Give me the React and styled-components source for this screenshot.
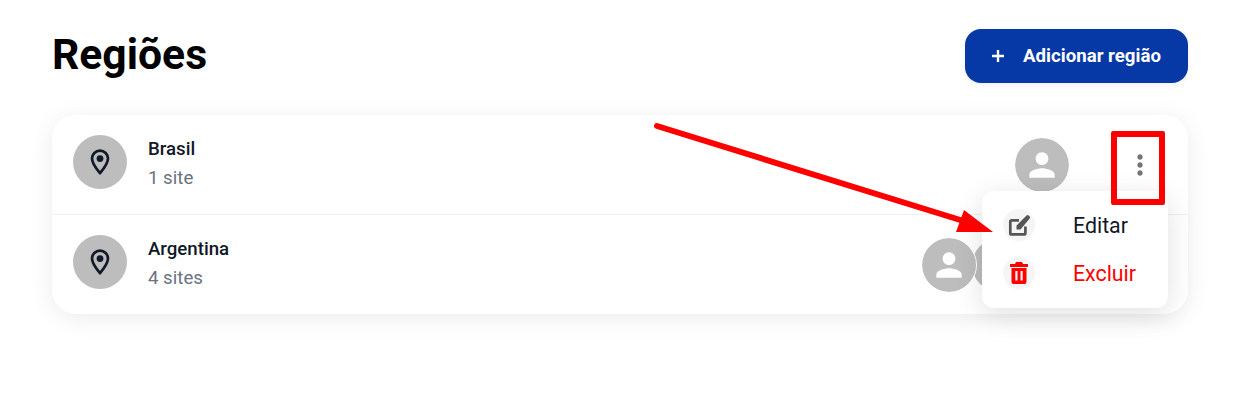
import React from "react";
import styled, { createGlobalStyle } from "styled-components";
import { MdMoreVert, MdPerson } from "react-icons/md";

const GlobalStyle = createGlobalStyle`
  html, body {
    margin: 0;
    background: #fff;
    font-family: Roboto, "Liberation Sans", sans-serif;
  }
`;

const regions = [
  { name: "Brasil", sites: "1 site", users: [0] },
  { name: "Argentina", sites: "4 sites", users: [0, -4, -11] },
];

const PlusIcon = () => (
  <svg width="14" height="14" viewBox="0 0 14 14">
    <path d="M7 1v12M1 7h12" stroke="#fff" strokeWidth="2.4" />
  </svg>
);

const PinIcon = () => (
  <svg width="24" height="28" viewBox="0 0 24 28" fill="none">
    <path
      d="M12 25.2C8 20.4 4 15.8 4 10.6a8 8 0 0 1 16 0c0 5.2-4 9.8-8 14.6z"
      stroke="#111827"
      strokeWidth="2.7"
      strokeLinejoin="round"
    />
    <circle cx="12" cy="10.6" r="3.4" fill="#111827" />
  </svg>
);

const EditIcon = () => (
  <svg width="24" height="24" viewBox="0 0 24 24" fill="none">
    <path
      d="M12 7.3H4.8A1.5 1.5 0 0 0 3.3 8.8v11.1a1.5 1.5 0 0 0 1.5 1.5h12.1a1.5 1.5 0 0 0 1.5-1.5V13.5"
      stroke="#555"
      strokeWidth="2.7"
    />
    <path
      d="M9.5 16.5v-4L19.5 2.4a1.6 1.6 0 0 1 2.2 0l1 1a1.6 1.6 0 0 1 0 2.2L13.5 16.5z"
      fill="#555"
    />
  </svg>
);

const TrashIcon = () => (
  <svg width="18" height="22" viewBox="0 0 18 22">
    <path
      fillRule="evenodd"
      fill="#ff0000"
      d="M6 0h6l1 2h5v3H0V2h5zM1.5 6h15v14a2 2 0 0 1-2 2h-11a2 2 0 0 1-2-2zM5.3 9v9.5h2.2V9zm5.2 0v9.5h2.2V9z"
    />
  </svg>
);

const App = () => {
  return (
    <Page>
      <GlobalStyle />
      <Header>
        <Title>Regiões</Title>
        <AddButton>
          <PlusIcon />
          Adicionar região
        </AddButton>
      </Header>

      <Card>
        {regions.map((region) => (
          <Row key={region.name}>
            <Info>
              <Circle>
                <PinIcon />
              </Circle>
              <Texts>
                <Name>{region.name}</Name>
                <Sites>{region.sites}</Sites>
              </Texts>
            </Info>
            <Avatars>
              {region.users.map((overlap, i) => (
                <Avatar key={i} $overlap={overlap}>
                  <MdPerson size={38} />
                </Avatar>
              ))}
            </Avatars>
            <Kebab>
              <MdMoreVert size={32} />
            </Kebab>
          </Row>
        ))}

        <Menu>
          <MenuItem>
            <MenuIcon>
              <EditIcon />
            </MenuIcon>
            Editar
          </MenuItem>
          <MenuItem $danger>
            <MenuIcon $danger>
              <TrashIcon />
            </MenuIcon>
            Excluir
          </MenuItem>
        </Menu>
      </Card>

      <Highlight />
      <Arrow width="1248" height="414" viewBox="0 0 1248 414">
        <line x1="657" y1="126" x2="970" y2="223" stroke="#ff0000" strokeWidth="6" strokeLinecap="round" />
        <polygon points="964,210 993,232 956,232" fill="#ff0000" />
      </Arrow>
    </Page>
  );
};

export default App;

const Page = styled.div`
  position: relative;
  box-sizing: border-box;
  width: 1248px;
  height: 414px;
  padding: 29px 60px 0 52px;
  overflow: hidden;
`;

const Header = styled.div`
  display: flex;
  justify-content: space-between;
  align-items: center;
  margin-bottom: 32px;
`;

const Title = styled.h1`
  align-self: flex-start;
  margin: 0;
  font-size: 42.67px;
  line-height: 50px;
  font-weight: 700;
  color: #000;
`;

const AddButton = styled.button`
  display: flex;
  align-items: center;
  justify-content: center;
  gap: 18px;
  box-sizing: border-box;
  width: 223px;
  height: 54px;
  padding: 0 1px 0 0;
  border: 0;
  border-radius: 16px;
  background: #0639a6;
  color: #fff;
  font-family: inherit;
  font-size: 18.67px;
  font-weight: 700;
  box-shadow: 0 2px 6px rgba(0, 0, 0, 0.06);
`;

const Card = styled.div`
  position: relative;
  height: 199px;
  border-radius: 24px;
  background: #fff;
  box-shadow: 0 4px 24px rgba(0, 0, 0, 0.08);
`;

const Row = styled.div`
  display: flex;
  align-items: center;
  box-sizing: border-box;
  height: 100px;
  padding: 0 21px;

  &:first-child {
    border-bottom: 1px solid #f0f0f0;
  }
`;

const Info = styled.div`
  display: flex;
  align-items: flex-start;
  gap: 21px;
  flex: 1;
  align-self: flex-start;
  padding-top: 20px;
`;

const Circle = styled.div`
  display: flex;
  align-items: center;
  justify-content: center;
  width: 54px;
  height: 54px;
  border-radius: 50%;
  background: #bdbdbd;
`;

const Texts = styled.div`
  display: flex;
  flex-direction: column;
  gap: 7.6px;
  padding-top: 2.6px;
`;

const Name = styled.div`
  font-size: 18.67px;
  line-height: 22px;
  font-weight: 500;
  color: #111827;
`;

const Sites = styled.div`
  font-size: 18.67px;
  line-height: 22px;
  color: #6b7280;
`;

const Avatars = styled.div`
  display: flex;
`;

const Avatar = styled.div`
  display: flex;
  align-items: center;
  justify-content: center;
  box-sizing: border-box;
  width: 54px;
  height: 54px;
  margin-left: ${(p) => p.$overlap}px;
  border-radius: 50%;
  background: #bdbdbd;
  color: #fff;
  outline: 1.5px solid #fff;

  &:first-child {
    z-index: 3;
  }
`;

const Kebab = styled.div`
  display: flex;
  align-items: center;
  justify-content: center;
  width: 54px;
  height: 54px;
  margin-left: 44px;
  color: #757575;
`;

const Menu = styled.div`
  position: absolute;
  top: 76px;
  right: 20px;
  z-index: 5;
  box-sizing: border-box;
  width: 186px;
  height: 117px;
  padding: 18px 21px;
  border-radius: 12px;
  background: #fff;
  box-shadow: 0 6px 28px rgba(0, 0, 0, 0.12);
`;

const MenuItem = styled.div`
  display: flex;
  align-items: center;
  gap: 38px;
  height: 32px;
  margin-bottom: 16px;
  font-size: 21.33px;
  color: ${(p) => (p.$danger ? "#ff0000" : "#111827")};
`;

const MenuIcon = styled.span`
  display: flex;
  align-items: center;
  justify-content: center;
  width: 32px;
  height: 32px;
  border-radius: 50%;
  background: #f5f5f5;
`;

const Highlight = styled.div`
  position: absolute;
  top: 131px;
  left: 1111px;
  z-index: 6;
  box-sizing: border-box;
  width: 54px;
  height: 74px;
  border: 6px solid #ff0000;
  border-radius: 2px;
`;

const Arrow = styled.svg`
  position: absolute;
  top: 0;
  left: 0;
  z-index: 7;
  pointer-events: none;
`;
